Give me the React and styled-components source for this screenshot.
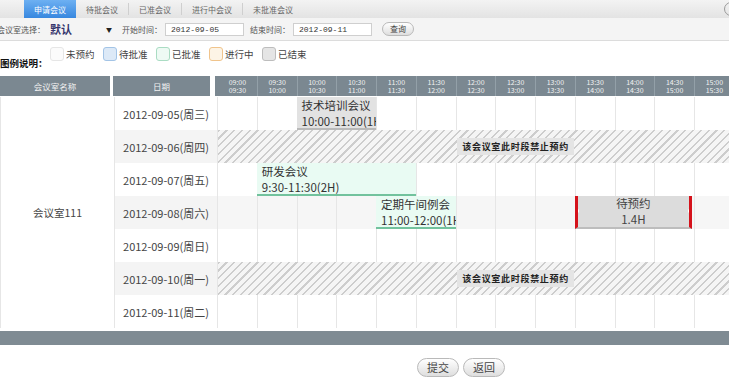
import React from 'react';
import styled, { createGlobalStyle, css } from 'styled-components';

const COL = 39.75;
const SLOT_COUNT = 15;

const pad = n => String(n).padStart(2, '0');
const slots = Array.from({ length: SLOT_COUNT }, (_, i) => {
  const from = 9 * 60 + i * 30;
  const to = from + 30;
  return [
    `${pad(Math.floor(from / 60))}:${pad(from % 60)}`,
    `${pad(Math.floor(to / 60))}:${pad(to % 60)}`,
  ];
});

const days = [
  {
    date: '2012-09-05(周三)',
    events: [{ start: 3, span: 2, kind: 'done', title: '技术培训会议', time: '10:00-11:00(1H)' }],
  },
  { date: '2012-09-06(周四)', blocked: true },
  {
    date: '2012-09-07(周五)',
    events: [{ start: 2, span: 4, kind: 'approved', title: '研发会议', time: '9:30-11:30(2H)' }],
  },
  {
    date: '2012-09-08(周六)',
    events: [
      { start: 5, span: 2, kind: 'approved', title: '定期午间例会', time: '11:00-12:00(1H)' },
      { start: 10, span: 3, kind: 'draft', title: '待预约', time: '1.4H' },
    ],
  },
  { date: '2012-09-09(周日)' },
  { date: '2012-09-10(周一)', blocked: true },
  { date: '2012-09-11(周二)' },
];

const legend = [
  { key: 'free', label: '未预约' },
  { key: 'waiting', label: '待批准' },
  { key: 'approved', label: '已批准' },
  { key: 'running', label: '进行中' },
  { key: 'done', label: '已结束' },
];

const tabs = ['申请会议', '待批会议', '已准会议', '进行中会议', '未批准会议'];

const GlobalStyle = createGlobalStyle`
  html, body {
    margin: 0;
    padding: 0;
    background: #fff;
  }
  body {
    font-family: "Noto Sans CJK SC", "Noto Sans", sans-serif;
    color: #333;
  }
`;

const Page = styled.div`
  width: 729px;
  height: 385px;
  overflow: hidden;
`;

const TabBar = styled.div`
  display: flex;
  align-items: stretch;
  height: 18px;
  padding-left: 24px;
  background: linear-gradient(#f3f3f3, #e3e3e3);
`;

const Tab = styled.div`
  display: flex;
  align-items: center;
  padding: 0 10px;
  font-size: 8px;
  color: #666;
  white-space: nowrap;
  ${p =>
    p.$active &&
    css`
      color: #fff;
      background: linear-gradient(#6db0f2, #3787df);
    `}
`;

const TabDivider = styled.span`
  align-self: center;
  width: 1px;
  height: 12px;
  background: #cfcfcf;
`;

const CloseDot = styled.span`
  align-self: center;
  margin-left: auto;
  margin-right: -9px;
  width: 12px;
  height: 12px;
  border: 1px solid #9a9a9a;
  border-radius: 50%;
`;

const FilterBar = styled.div`
  display: flex;
  align-items: center;
  height: 22px;
  background: #f4f4f4;
  border-bottom: 1px solid #dcdcdc;
  font-size: 8px;
  color: #555;
  white-space: nowrap;
`;

const FieldLabel = styled.span`
  margin-left: ${p => p.$offset || 0}px;
`;

const RoomSelect = styled.div`
  display: flex;
  align-items: center;
  justify-content: space-between;
  width: 62px;
  margin-left: 5px;
  font-size: 11px;
  font-weight: 700;
  color: #34346c;
`;

const Caret = styled.span`
  font-size: 6px;
  color: #222;
`;

const DateInput = styled.div`
  width: 72px;
  height: 11px;
  margin-left: 3px;
  padding: 0 0 0 5px;
  line-height: 11px;
  border: 1px solid #cfcfcf;
  background: #fff;
  font-family: "Liberation Mono", monospace;
  font-size: 8px;
  color: #333;
`;

const PillButton = styled.button`
  height: ${p => (p.$small ? 14 : 19)}px;
  padding: 0 ${p => (p.$small ? 7 : 9)}px;
  margin-left: ${p => p.$offset || 0}px;
  border: 1px solid #b9b9b9;
  border-radius: 10px;
  background: linear-gradient(#ffffff, #dedede);
  font-family: inherit;
  font-size: ${p => (p.$small ? 8 : 11)}px;
  line-height: 1;
  color: #444;
  cursor: pointer;
`;

const LegendRow = styled.div`
  display: flex;
  align-items: flex-start;
  height: 35px;
  padding-top: 6px;
  box-sizing: border-box;
  font-size: 9.5px;
  color: #444;
`;

const LegendTitle = styled.span`
  width: 50px;
  margin-top: 9px;
  font-weight: 700;
  color: #111;
`;

const LegendItem = styled.div`
  display: flex;
  align-items: center;
  width: 53px;
  height: 14px;
`;

const swatch = {
  free: ['#fbfbfb', '#e6e6e6'],
  waiting: ['#dce9f7', '#a3c4e6'],
  approved: ['#eefaf4', '#aadcc3'],
  running: ['#fdf4e6', '#f0c48c'],
  done: ['#e5e5e5', '#bdbdbd'],
};

const Swatch = styled.span`
  width: 12px;
  height: 12px;
  margin-right: 2px;
  border-radius: 3px;
  background: ${p => swatch[p.$kind][0]};
  border: 1px solid ${p => swatch[p.$kind][1]};
`;

const HeaderRow = styled.div`
  display: flex;
  height: 20px;
  color: #f2f2f2;
  white-space: nowrap;
`;

const HeadCell = styled.div`
  display: flex;
  flex: none;
  align-items: center;
  justify-content: center;
  width: ${p => p.$width}px;
  margin-right: ${p => p.$gap || 0}px;
  background: #7b8891;
  font-size: 8.5px;
`;

const TimeHead = styled.div`
  display: flex;
  flex: none;
  padding-left: 2px;
  background: #7b8891;
`;

const TimeHeadCell = styled.div`
  display: flex;
  flex-direction: column;
  align-items: center;
  justify-content: center;
  width: ${COL}px;
  flex: none;
  box-sizing: border-box;
  border-left: 1px solid ${p => (p.$first ? 'transparent' : '#93a0a8')};
  font-size: 7px;
  line-height: 8.5px;
`;

const Body = styled.div`
  display: grid;
  grid-template-columns: 115px 102px ${SLOT_COUNT * COL}px;
  grid-template-rows: repeat(${days.length}, 33px);
  margin-top: 1px;
`;

const RoomCell = styled.div`
  grid-column: 1;
  grid-row: 1 / span ${days.length};
  display: flex;
  align-items: center;
  justify-content: center;
  border-left: 1px solid #e6e6e6;
  border-right: 1px solid #e6e6e6;
  font-size: 10.5px;
  color: #444;
`;

const DateCell = styled.div`
  display: flex;
  align-items: center;
  justify-content: center;
  background: ${p => (p.$odd ? '#f4f4f4' : '#fff')};
  font-size: 11px;
  color: #444;
  white-space: nowrap;
`;

const TimeRow = styled.div`
  display: grid;
  grid-template-columns: repeat(${SLOT_COUNT}, ${COL}px);
  background: ${p => (p.$odd ? '#f6f6f6' : '#fff')};
`;

const Slot = styled.div`
  grid-row: 1;
  grid-column: ${p => p.$col};
  border-left: 1px solid #e6e6e6;
`;

const Blocked = styled.div`
  grid-row: 1;
  grid-column: 1 / -1;
  display: flex;
  align-items: center;
  justify-content: center;
  background: repeating-linear-gradient(135deg, #cdcdcd 0 1.6px, #f5f5f5 1.6px 5.5px);
  border-left: 1px solid #e6e6e6;
`;

const BlockedLabel = styled.span`
  padding: 2px 5px;
  background: #e4e4e4;
  font-size: 9px;
  font-weight: 700;
  letter-spacing: 0.7px;
  color: #222;
`;

const eventKinds = {
  done: css`
    background: #e2e2e2;
    border-bottom: 2px solid #b9b9b9;
  `,
  approved: css`
    background: #e9fbf3;
    border-bottom: 2px solid #72c29d;
  `,
  draft: css`
    align-items: center;
    margin-right: 2px;
    padding: 0;
    background: #dcdcdc;
    border-left: 3px solid #d5121b;
    border-right: 3px solid #d5121b;
    border-bottom: 2px solid #bdbdbd;
    color: #444;
    &::before,
    &::after {
      content: '';
      position: absolute;
      top: 13px;
      border: 2px solid transparent;
    }
    &::before {
      left: -3px;
      border-right-color: #fff;
    }
    &::after {
      right: -3px;
      border-left-color: #fff;
    }
  `,
};

const Event = styled.div`
  position: relative;
  z-index: 1;
  grid-row: 1;
  display: flex;
  flex-direction: column;
  min-width: 0;
  padding: 1px 0 0 5px;
  overflow: hidden;
  font-size: 11.5px;
  line-height: 15.5px;
  color: #333;
  white-space: nowrap;
  ${p => eventKinds[p.$kind]}
`;

const FooterBar = styled.div`
  height: 14px;
  margin-top: 3px;
  background: #7f8b93;
`;

const Actions = styled.div`
  display: flex;
  gap: 4px;
  padding: 13px 0 0 417px;
`;

function ScheduleRow({ day, odd }) {
  return (
    <>
      <DateCell $odd={odd}>{day.date}</DateCell>
      <TimeRow $odd={odd}>
        {day.blocked ? (
          <Blocked>
            <BlockedLabel>该会议室此时段禁止预约</BlockedLabel>
          </Blocked>
        ) : (
          <>
            {slots.map((_, i) => (
              <Slot key={i} $col={i + 1} />
            ))}
            {(day.events || []).map(ev => (
              <Event
                key={ev.title}
                $kind={ev.kind}
                style={{ gridColumn: `${ev.start} / span ${ev.span}` }}
              >
                <span>{ev.title}</span>
                <span>{ev.time}</span>
              </Event>
            ))}
          </>
        )}
      </TimeRow>
    </>
  );
}

export default function App() {
  return (
    <Page>
      <GlobalStyle />
      <TabBar>
        {tabs.map((t, i) => (
          <React.Fragment key={t}>
            {i > 1 && <TabDivider />}
            <Tab $active={i === 0}>{t}</Tab>
          </React.Fragment>
        ))}
        <CloseDot />
      </TabBar>

      <FilterBar>
        <FieldLabel $offset={-3}>会议室选择：</FieldLabel>
        <RoomSelect>
          默认
          <Caret>▼</Caret>
        </RoomSelect>
        <FieldLabel $offset={10}>开始时间：</FieldLabel>
        <DateInput>2012-09-05</DateInput>
        <FieldLabel $offset={6}>结束时间：</FieldLabel>
        <DateInput>2012-09-11</DateInput>
        <PillButton $small $offset={10}>查询</PillButton>
      </FilterBar>

      <LegendRow>
        <LegendTitle>图例说明：</LegendTitle>
        {legend.map(l => (
          <LegendItem key={l.key}>
            <Swatch $kind={l.key} />
            {l.label}
          </LegendItem>
        ))}
      </LegendRow>

      <HeaderRow>
        <HeadCell $width={110} $gap={3}>会议室名称</HeadCell>
        <HeadCell $width={97} $gap={5}>日期</HeadCell>
        <TimeHead>
          {slots.map(([from, to], i) => (
            <TimeHeadCell key={from} $first={i === 0}>
              <span>{from}</span>
              <span>{to}</span>
            </TimeHeadCell>
          ))}
        </TimeHead>
      </HeaderRow>

      <Body>
        <RoomCell>会议室111</RoomCell>
        {days.map((day, i) => (
          <ScheduleRow key={day.date} day={day} odd={i % 2 === 1} />
        ))}
      </Body>

      <FooterBar />

      <Actions>
        <PillButton>提交</PillButton>
        <PillButton>返回</PillButton>
      </Actions>
    </Page>
  );
}
